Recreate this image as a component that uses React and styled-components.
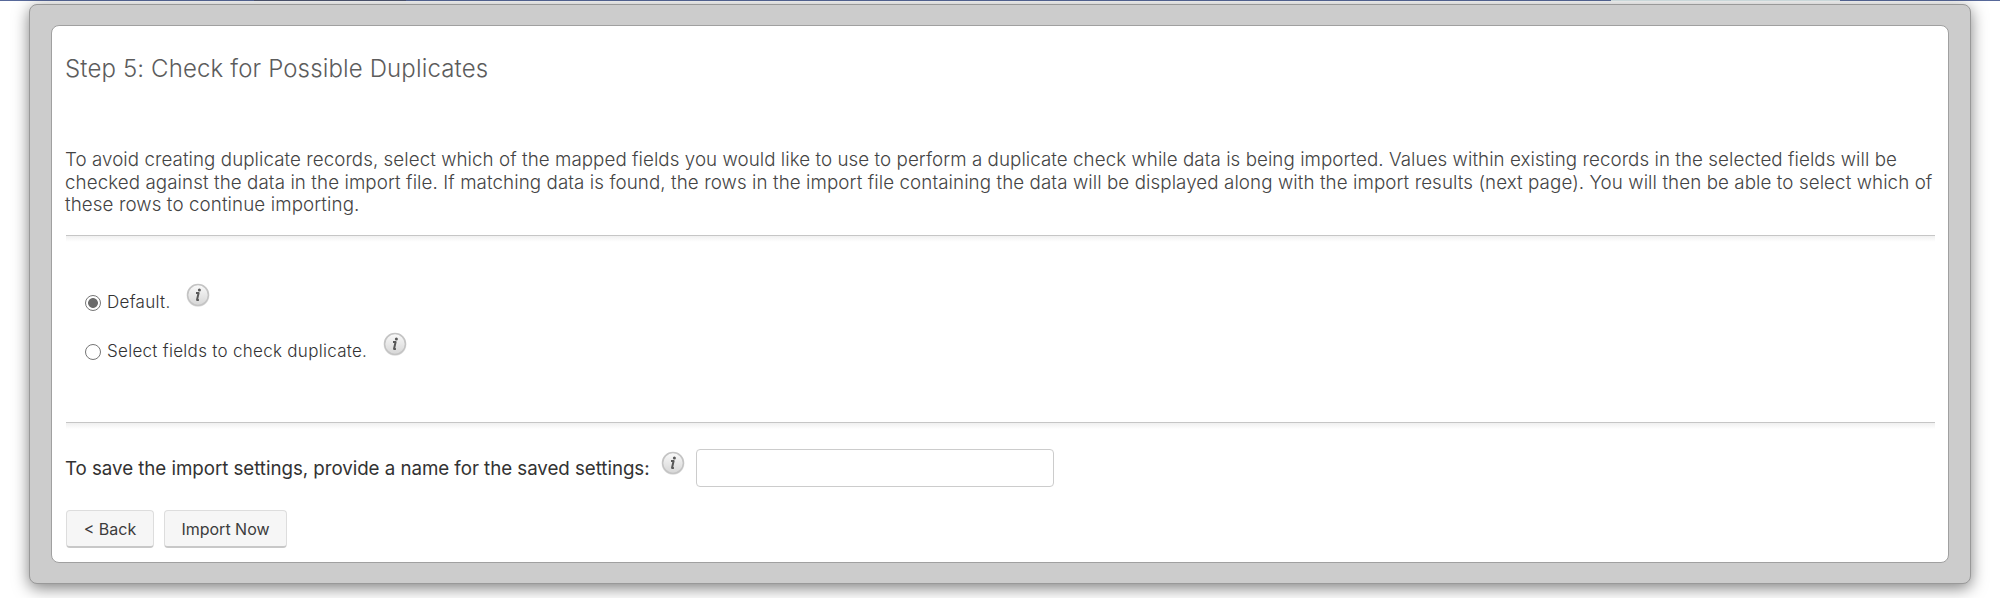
import React from "react";
import styled, { createGlobalStyle } from "styled-components";

const Global = createGlobalStyle`
  * { box-sizing: border-box; }
  body { margin: 0; background: #fff; overflow: hidden; font-family: Inter, "Liberation Sans", sans-serif; font-optical-sizing: none; color: #333; }
`;

const Page = styled.div`
  height: 598px;
  display: flex;
  flex-direction: column;
`;

const TopStrip = styled.div`
  flex: none;
  height: 1px;
  background: linear-gradient(90deg, #58699a 254px, #4f5873 254px 406px, #58699a 406px 1611px, #dcebed 1611px 1840px, #58699a 1840px);
`;

const Dialog = styled.div`
  height: 580px;
  margin: 3px 29px 0;
  padding: 20px 21px;
  background: #ccc;
  border: 1px solid #999;
  border-radius: 8px;
  box-shadow: 0 4px 16px rgba(0, 0, 0, 0.5);
`;

const Panel = styled.div`
  height: 538px;
  padding: 0 13px;
  background: #fff;
  border: 1px solid #a0a0a0;
  border-radius: 8px;
  display: flex;
  flex-direction: column;
`;

const Title = styled.h1`
  margin: 28px 0 0;
  font-size: 24px;
  line-height: 30px;
  font-weight: 300;
  letter-spacing: 0.14px;
  color: #5c5c5c;
  white-space: nowrap;
`;

const Intro = styled.p`
  margin: 65px 0 0;
  font-size: 18.75px;
  line-height: 22.5px;
  font-weight: 300;
  color: #444;
  white-space: nowrap;
`;

const Line = styled.span`
  display: block;
  letter-spacing: ${(p) => p.$track || "0"};
`;

const Divider = styled.div`
  flex: none;
  height: 7px;
  margin-top: ${(p) => p.$top}px;
  margin-left: 1px;
  border-top: 1px solid #c6c6c6;
  background: linear-gradient(#f0f0f0, #fff);
`;

const Options = styled.div`
  margin-top: 36px;
  padding-left: 20px;
  display: flex;
  flex-direction: column;
`;

const Option = styled.label`
  display: flex;
  align-items: center;
  height: 49px;
  font-size: 17px;
  font-weight: 300;
  letter-spacing: 0.29px;
  white-space: nowrap;
`;

const Radio = styled.span`
  width: 16px;
  height: 16px;
  margin-right: 6px;
  border: 1.5px solid #767676;
  border-radius: 50%;
  background: ${(p) => (p.$on ? "radial-gradient(circle, #6b6b6b 4.5px, #fff 5.3px)" : "#fff")};
`;

const OptionText = styled.span`
  padding-bottom: 2px;
`;

const InfoSvg = styled.svg`
  flex: none;
  width: 24px;
  height: 24px;
  margin: 0 0 ${(p) => p.$lift}px ${(p) => p.$gap}px;
`;

const SaveRow = styled.div`
  display: flex;
  align-items: center;
  height: 38px;
  margin-top: 20px;
  white-space: nowrap;
`;

const SaveLabel = styled.label`
  font-size: 18.75px;
  font-weight: 400;
  letter-spacing: -0.055px;
`;

const Input = styled.input`
  width: 358px;
  height: 38px;
  margin-left: 11px;
  border: 1px solid #ccc;
  border-radius: 4px;
  background: #fff;
  outline: none;
`;

const Actions = styled.div`
  display: flex;
  gap: 10px;
  margin: 23px 0 0 1px;
`;

const Button = styled.button`
  width: ${(p) => p.$w}px;
  height: 38px;
  padding: 0;
  border: 1px solid #ddd;
  border-bottom: 2px solid #c8c8c8;
  border-radius: 4px;
  background: #f6f6f6;
  color: #3c3c3c;
  font: 400 16px Inter, "Liberation Sans", sans-serif;
  white-space: nowrap;
`;

function Info({ id, gap, lift }) {
  return (
    <InfoSvg $gap={gap} $lift={lift} viewBox="0 0 24 24" aria-label="Info">
      <defs>
        <linearGradient id={id} x1="0" y1="0" x2="0" y2="1">
          <stop offset="0" stopColor="#fafafa" />
          <stop offset="1" stopColor="#d6d6d6" />
        </linearGradient>
      </defs>
      <circle cx="12" cy="12.4" r="11.4" fill="#e8e8e8" />
      <circle cx="12" cy="12" r="10.4" fill={`url(#${id})`} stroke="#c4c4c4" strokeWidth="1.5" />
      <circle cx="13.4" cy="6.9" r="1.5" fill="#585858" />
      <path d="M10 10.1h2.6l-1.6 6.8h1.9" fill="none" stroke="#585858" strokeWidth="2" strokeLinejoin="round" />
    </InfoSvg>
  );
}

export default function App() {
  return (
    <Page>
      <Global />
      <TopStrip />
      <Dialog>
        <Panel>
          <Title>Step 5: Check for Possible Duplicates</Title>
          <Intro>
            <Line $track="0.056px">To avoid creating duplicate records, select which of the mapped fields you would like to use to perform a duplicate check while data is being imported. Values within existing records in the selected fields will be</Line>
            <Line $track="0.085px">checked against the data in the import file. If matching data is found, the rows in the import file containing the data will be displayed along with the import results (next page). You will then be able to select which of</Line>
            <Line $track="0.1px">these rows to continue importing.</Line>
          </Intro>
          <Divider $top={18.5} />
          <Options>
            <Option>
              <Radio $on />
              <OptionText>Default.</OptionText>
              <Info id="infoDefault" gap={15} lift={15} />
            </Option>
            <Option>
              <Radio />
              <OptionText>Select fields to check duplicate.</OptionText>
              <Info id="infoSelect" gap={16} lift={15} />
            </Option>
          </Options>
          <Divider $top={46} />
          <SaveRow>
            <SaveLabel>To save the import settings, provide a name for the saved settings:</SaveLabel>
            <Info id="infoSave" gap={11} lift={11} />
            <Input aria-label="Saved settings name" />
          </SaveRow>
          <Actions>
            <Button $w={88}>&lt; Back</Button>
            <Button $w={123}>Import Now</Button>
          </Actions>
        </Panel>
      </Dialog>
    </Page>
  );
}
